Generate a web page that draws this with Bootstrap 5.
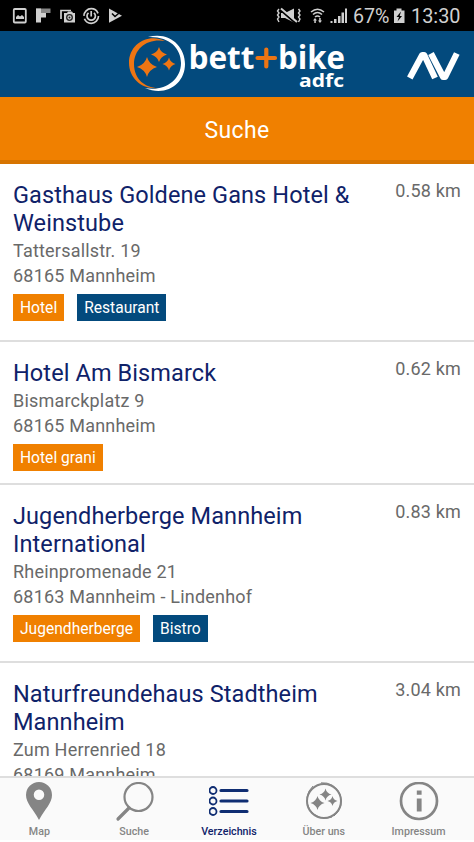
<!DOCTYPE html>
<html lang="de">
<head>
<meta charset="utf-8">
<meta name="viewport" content="width=device-width, initial-scale=1">
<title>Bett+Bike – Verzeichnis</title>
<link href="https://cdn.jsdelivr.net/npm/bootstrap@5.3.0/dist/css/bootstrap.min.css" rel="stylesheet">
<style>
body{font-family:Roboto,"Liberation Sans",sans-serif;background:#fff;color:#696969;height:842px}
svg{display:block;flex-shrink:0}
.status-bar{height:31px;background:#000}
.app-bar{height:66px;background:#034a7d}
.search-btn{height:67px;background:#f08000;border-bottom:4px solid #d77400;font-size:23px;letter-spacing:.4px;color:#fff}
.search-btn span{display:block;padding-top:5px}
.hotel{border-bottom:2px solid #dedede;padding:17px 13px 19px;height:178px}
.hotel.compact{height:143px}
.hotel h2{font-size:23.5px;line-height:28px;color:#0f2269;letter-spacing:.1px}
.addr{font-size:18px;line-height:25px;letter-spacing:.2px;padding-top:1px}
.dist{font-size:18px;line-height:20px;letter-spacing:.2px}
.tags{gap:13px;margin-top:6px}
.tag{height:27px;padding:0 7px;font-size:15.6px;line-height:28px;color:#fff}
.tag-o{background:#f08000}.tag-b{background:#034a7d}
.tabs{height:64px;border-top:2px solid #dedede;background:#fafafa;margin-bottom:2px}
.tab-row{width:474px;margin-left:-8px}
.tab{font-size:10.7px;line-height:14px;color:#858585;font-weight:500;width:20%;padding-top:4px}
.tab.on{color:#0f2269}
.tab svg{margin-bottom:3px}
</style>
</head>
<body class="d-flex flex-column overflow-hidden">
<div class="status-bar flex-shrink-0">
<svg width="474" height="31" viewBox="0 0 474 31" font-family="Roboto, sans-serif" fill="#d0d0d0">
<rect x="13.8" y="9" width="12" height="13.5" rx="1" fill="none" stroke="#d0d0d0" stroke-width="1.8"/>
<path d="M16 19v-2l2-2 2 1.5 2-1.5 2 2v2z"/>
<path d="M36 8.500h14.500v4.500H36z" opacity=".65"/><path d="M36 8.500h5v14h-5zM41 13h5v4.500h-5z"/>
<path d="M61 19v-8.500h10" fill="none" stroke="#d0d0d0" stroke-width="1.7"/>
<path d="M64 13h3l1-1.500h4l1 1.500h2v9.500H64z"/><circle cx="69.500" cy="17.500" r="2.800" fill="none" stroke="#222" stroke-width="1.300"/><circle cx="69.500" cy="17.500" r="1" fill="#222"/>
<g fill="none" stroke="#d0d0d0" stroke-width="1.700"><circle cx="91.200" cy="16" r="7.300" stroke-dasharray="20 2.930"/><path d="M88.500 12.800a4.200 4.200 0 1 0 5.400 0M91.200 11v5.500"/></g>
<path d="M109 8.500l13 7.200-13 7z"/><path d="M112 13.500l3 3 7-6" fill="none" stroke="#000" stroke-width="1.500"/>
<path d="M281 13h4l9-4.500v14L285 18h-4z"/>
<path d="M280.500 10l16 14" stroke="#000" stroke-width="2"/><path d="M281 8.500l16 13.500" stroke="#d0d0d0" stroke-width="2"/>
<path d="M279 9l-1.500 2 1.500 2-1.500 2 1.500 2-1.500 2 1.500 3M298.500 9l1.500 2-1.500 2 1.500 2-1.500 2 1.500 2-1.500 3" fill="none" stroke="#d0d0d0" stroke-width="1.400"/>
<path d="M311 12q6.500-5.500 13 0M313 14.500q4.500-4 9 0M315 17q2.500-2 5 0" fill="none" stroke="#d0d0d0" stroke-width="1.600"/>
<path d="M313 20.500l2-2.500 2 2.500h-1.200V23h-1.500v-2.500zM318 20.500h1.200V18h1.500v2.500h1.300l-2 2.500z"/>
<path d="M330.500 21h2v2h-2zM334 19h2.500v4H334zM338 16h2.500v7H338zM341.500 12.500h2.500V23h-2.500zM345 8.500h2V23h-2z"/>
<text x="353" y="23" font-size="20" textLength="36.500" lengthAdjust="spacingAndGlyphs">67%</text>
<path d="M394 10.500h2.500v-2h5v2h3V23H394z"/><path d="M401 11.500l-4.500 5.500h2.500l-1.500 4.500 4.500-5.500h-2.300z" fill="#000"/>
<text x="411" y="23" font-size="20.500" textLength="49.500" lengthAdjust="spacingAndGlyphs">13:30</text>
</svg>
</div>
<header class="app-bar flex-shrink-0">
<svg width="474" height="66" viewBox="0 0 474 66" font-family="'Open Sans','Noto Sans',sans-serif" font-weight="700" fill="#fff">
<path fill-rule="evenodd" d="M148 6C169 0 185 15 185 33C185 53 166 66 145 57C163 61 181 50 181 32C181 17 169 5 148 6z"/>
<path d="M165 10C148 2 129 13 129 32C129 47 142 59 158 57C145 57 134 48 134 33C134 17 148 7 165 10z" fill="#ee7513"/>
<g fill="#ee7513"><path d="M147 26q2 7.500 10 10-8 2.500-10 10-2-7.500-10-10 8-2.500 10-10zM159 16q1.500 5.500 8 7.500-6.500 2-8 7.500-1.500-5.500-8-7.500 6.500-2 8-7.500zM169 26.500q1.200 4.800 6.500 6.500-5.300 1.700-6.500 6.500-1.200-4.800-6.500-6.500 5.300-1.700 6.500-6.500z"/></g>
<text x="188.500" y="38" font-size="33" textLength="66" lengthAdjust="spacingAndGlyphs">bett</text>
<text x="278" y="38" font-size="33" textLength="67" lengthAdjust="spacingAndGlyphs">bike</text>
<path d="M266.300 18.500v17M257.500 27h17.500" stroke="#ee7513" stroke-width="4.200" stroke-linecap="round"/>
<text x="299" y="56" font-size="18.500" textLength="45" lengthAdjust="spacingAndGlyphs">adfc</text>
<path d="M409.800 47L422.200 24h2L435 47M431 22.500L443.200 46h2l11.600-23.500" fill="none" stroke="#fff" stroke-width="6.200" stroke-linejoin="round"/>
</svg>
</header>
<button class="search-btn btn rounded-0 border-top-0 border-start-0 border-end-0 w-100 p-0 flex-shrink-0"><span>Suche</span></button>
<main class="flex-grow-1 overflow-hidden">
<article class="hotel"><div class="d-flex justify-content-between align-items-start"><h2 class="m-0 fw-normal">Gasthaus Goldene Gans Hotel &amp;<br>Weinstube</h2><span class="dist text-nowrap">0.58 km</span></div>
<div class="addr">Tattersallstr. 19<br>68165 Mannheim</div><div class="d-flex tags"><span class="tag tag-o">Hotel</span><span class="tag tag-b">Restaurant</span></div></article>
<article class="hotel compact"><div class="d-flex justify-content-between align-items-start"><h2 class="m-0 fw-normal">Hotel Am Bismarck</h2><span class="dist text-nowrap">0.62 km</span></div>
<div class="addr">Bismarckplatz 9<br>68165 Mannheim</div><div class="d-flex tags"><span class="tag tag-o">Hotel grani</span></div></article>
<article class="hotel"><div class="d-flex justify-content-between align-items-start"><h2 class="m-0 fw-normal">Jugendherberge Mannheim<br>International</h2><span class="dist text-nowrap">0.83 km</span></div>
<div class="addr">Rheinpromenade 21<br>68163 Mannheim - Lindenhof</div><div class="d-flex tags"><span class="tag tag-o">Jugendherberge</span><span class="tag tag-b">Bistro</span></div></article>
<article class="hotel"><div class="d-flex justify-content-between align-items-start"><h2 class="m-0 fw-normal">Naturfreundehaus Stadtheim<br>Mannheim</h2><span class="dist text-nowrap">3.04 km</span></div>
<div class="addr">Zum Herrenried 18<br>68169 Mannheim</div></article>
</main>
<nav class="tabs flex-shrink-0"><div class="tab-row d-flex">
<a class="tab d-flex flex-column align-items-center text-decoration-none" href="#"><svg width="40" height="40" viewBox="0 0 40 40"><path fill="#858585" fill-rule="evenodd" d="M20 0a13 13 0 0 0-13 13c0 8 7 14 13 25 6-11 13-17 13-25A13 13 0 0 0 20 0zm0 7.500a5 5 0 1 1 0 10.500 5 5 0 0 1 0-10.500z"/></svg>Map</a>
<a class="tab d-flex flex-column align-items-center text-decoration-none" href="#"><svg width="40" height="40" viewBox="0 0 40 40" fill="none" stroke="#858585"><circle cx="24.500" cy="15" r="14" stroke-width="2.200"/><path d="M15 26L4 37" stroke-width="3.200" stroke-linecap="round"/></svg>Suche</a>
<a class="tab on d-flex flex-column align-items-center text-decoration-none" href="#"><svg width="40" height="40" viewBox="0 0 40 40" fill="none" stroke="#0f2d72"><g stroke-width="1.800"><circle cx="4" cy="8.500" r="3.500"/><circle cx="4" cy="19" r="3.500"/><circle cx="4" cy="29.500" r="3.500"/></g><path d="M12 8.500h26M12 19h26M12 29.500h26" stroke-width="3.200" stroke-linecap="round"/></svg>Verzeichnis</a>
<a class="tab d-flex flex-column align-items-center text-decoration-none" href="#"><svg width="40" height="40" viewBox="0 0 40 40"><circle cx="20" cy="19" r="17" fill="none" stroke="#858585" stroke-width="2"/><path d="M17 .8A18.500 18.500 0 0 1 30 34M28 35A18.500 18.500 0 0 1 9 4" fill="none" stroke="#858585" stroke-width="1"/><path fill="#858585" d="M13.500 14q1.200 5.200 7 7-5.800 1.800-7 7-1.200-5.200-7-7 5.800-1.800 7-7zM21.500 6.500q1 4.700 6 6-5 1.300-6 6-1-4.700-6-6 5-1.300 6-6zM28.500 14q.8 4 5 5-4.200 1-5 5-.8-4-5-5 4.200-1 5-5z"/></svg>Über uns</a>
<a class="tab d-flex flex-column align-items-center text-decoration-none" href="#"><svg width="40" height="40" viewBox="0 0 40 40"><circle cx="20" cy="19" r="18" fill="none" stroke="#858585" stroke-width="2.700"/><path fill="#858585" d="M17.800 8.500h4.800v4.300h-4.800zM17.800 16.500h4.800v13h-4.800z"/></svg>Impressum</a>
</div></nav>
<script src="https://cdn.jsdelivr.net/npm/bootstrap@5.3.0/dist/js/bootstrap.bundle.min.js"></script>
</body>
</html>
